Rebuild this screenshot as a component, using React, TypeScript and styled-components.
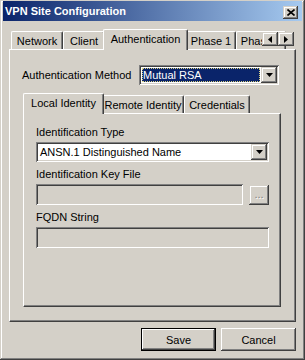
import React from "react"
import styled, {createGlobalStyle, css} from "styled-components"

const FACE = "#D4D0C8"
const SHADOW = "#808080"
const DARK = "#404040"
const HILITE = "#0A246A"

const GlobalStyle = createGlobalStyle`
    html, body {
        margin: 0;
        padding: 0;
        background: ${FACE};
    }
    body {
        font-family: "Liberation Sans", Arial, sans-serif;
        font-size: 11px;
        color: #000;
    }
`

const raised = css`
    background: ${FACE};
    box-shadow: inset -1px -1px ${DARK}, inset 1px 1px ${FACE}, inset -2px -2px ${SHADOW}, inset 2px 2px #fff;
`

const sunken = css`
    box-shadow: inset 1px 1px ${SHADOW}, inset -1px -1px #fff, inset 2px 2px ${DARK}, inset -2px -2px ${FACE};
`

export const Window = styled.div`
    box-sizing: border-box;
    width: 305px;
    height: 360px;
    padding: 1px 3px 0;
    display: flex;
    flex-direction: column;
    background: ${FACE};
    box-shadow: inset -1px -1px ${DARK}, inset 1px 1px ${FACE}, inset -2px -2px ${SHADOW}, inset 2px 2px #fff;
`

export const TitleBar = styled.div`
    height: 20px;
    flex: 0 0 auto;
    display: flex;
    align-items: flex-start;
    justify-content: space-between;
    padding: 0 4px 0 2px;
    background: linear-gradient(to right, ${HILITE}, #A6CAF0);
    color: #fff;
    font-weight: bold;
`

export const TitleText = styled.span`
    line-height: 20px;
    white-space: nowrap;
`

export const CloseButton = styled.div`
    ${raised};
    width: 15px;
    height: 13px;
    margin-top: 5px;
    display: flex;
    align-items: center;
    justify-content: center;
    padding-bottom: 1px;
    box-sizing: border-box;
`

export const Body = styled.div`
    flex: 1;
    display: flex;
    flex-direction: column;
    padding: 8px 6px 0;
`

export const TabControl = styled.div<{$indent?: number; $top?: number}>`
    position: relative;
    margin-left: ${p => p.$indent || 0}px;
    margin-top: ${p => p.$top || 0}px;
`

export const TabStrip = styled.div`
    display: flex;
    align-items: flex-end;
    height: 20px;
    padding-left: 2px;
`

export const Tab = styled.div<{$w: number; $active?: boolean}>`
    box-sizing: border-box;
    flex: 0 0 auto;
    position: relative;
    z-index: ${p => (p.$active ? 2 : 1)};
    width: ${p => (p.$active ? p.$w + 4 : p.$w)}px;
    height: ${p => (p.$active ? 21 : 18)}px;
    margin: ${p => (p.$active ? "0 -2px -1px" : "0")};
    padding-bottom: ${p => (p.$active ? 2 : 0)}px;
    display: flex;
    align-items: center;
    justify-content: center;
    overflow: hidden;
    white-space: nowrap;
    background: ${FACE};
    border-top: 1px solid #fff;
    border-left: 1px solid #fff;
    border-right: 1px solid ${DARK};
    border-radius: 2px 2px 0 0;
    box-shadow: inset -1px 0 ${SHADOW};
`

export const TabPanel = styled.div<{$h: number}>`
    box-sizing: border-box;
    height: ${p => p.$h}px;
    border-top: 1px solid #fff;
    border-left: 1px solid #fff;
    border-right: 1px solid ${DARK};
    border-bottom: 1px solid ${DARK};
    box-shadow: inset -1px -1px ${SHADOW};
    display: flex;
    flex-direction: column;
`

export const OuterPanel = styled(TabPanel)`
    padding: 15px 14px 0 12px;
`

export const InnerPanel = styled(TabPanel)`
    padding: 12px 11px 0 12px;
`

export const ScrollArrows = styled.div`
    position: absolute;
    top: 3px;
    right: 2px;
    z-index: 3;
    display: flex;
`

export const SmallButton = styled.div<{$w: number; $h: number}>`
    ${raised};
    box-sizing: border-box;
    width: ${p => p.$w}px;
    height: ${p => p.$h}px;
    flex: 0 0 auto;
    display: flex;
    align-items: center;
    justify-content: center;
`

export const MethodRow = styled.div`
    display: flex;
    align-items: center;
    height: 20px;
`

export const Label = styled.div`
    line-height: 13px;
    white-space: nowrap;
`

export const MethodCombo = styled.div`
    ${sunken};
    box-sizing: border-box;
    width: 140px;
    height: 20px;
    margin: 0 2px 0 auto;
    padding: 2px;
    display: flex;
    background: #fff;
`

export const Combo = styled(MethodCombo)`
    width: auto;
    margin: 0;
`

export const ComboText = styled.div<{$selected?: boolean}>`
    flex: 1;
    margin: 1px;
    padding: 0 1px;
    line-height: 14px;
    white-space: nowrap;
    overflow: hidden;
    ${p => p.$selected && css`
        background: ${HILITE};
        color: #fff;
        outline: 1px dotted #d8d080;
        outline-offset: -1px;
    `}
`

export const FieldGroup = styled.div`
    display: flex;
    flex-direction: column;
    gap: 3px;
    margin-bottom: 6px;
`

export const FileRow = styled.div`
    display: flex;
    align-items: center;
    gap: 6px;
`

export const TextBox = styled.div`
    ${sunken};
    box-sizing: border-box;
    flex: 1 1 auto;
    min-width: 0;
    height: 21px;
    background: ${FACE};
`

export const DisabledDots = styled.span`
    color: ${SHADOW};
    text-shadow: 1px 1px #fff;
    line-height: 10px;
    padding-bottom: 2px;
`

export const ButtonRow = styled.div`
    display: flex;
    justify-content: flex-end;
    gap: 5px;
    margin-top: 6px;
`

export const PushButton = styled.button<{$default?: boolean}>`
    box-sizing: border-box;
    width: 75px;
    height: 23px;
    padding: 0;
    font: inherit;
    color: #000;
    background: ${FACE};
    border: ${p => (p.$default ? "1px solid #000" : "none")};
    box-shadow: inset -1px -1px ${DARK}, inset 1px 1px #fff, inset -2px -2px ${SHADOW};
`

const DownArrow = () => (
    <svg width="7" height="4" viewBox="0 0 7 4"><polygon points="0,0 7,0 3.5,4" fill="#000" /></svg>
)

const SideArrow: React.FC<{dir: "left" | "right"}> = ({dir}) => (
    <svg width="4" height="7" viewBox="0 0 4 7">
        <polygon points={dir == "left" ? "4,0 4,7 0,3.5" : "0,0 0,7 4,3.5"} fill="#000" />
    </svg>
)

const CloseGlyph = () => (
    <svg width="8" height="7" viewBox="0 0 8 7">
        <path d="M0.5 0.5 L7.5 6.5 M7.5 0.5 L0.5 6.5" stroke="#000" strokeWidth="1.6" />
    </svg>
)

const outerTabs = [
    {label: "Network", w: 52},
    {label: "Client", w: 42},
    {label: "Authentication", w: 81, active: true},
    {label: "Phase 1", w: 50},
    {label: "Phase 2", w: 50},
]

const innerTabs = [
    {label: "Local Identity", w: 77, active: true},
    {label: "Remote Identity", w: 82},
    {label: "Credentials", w: 66},
]

const App: React.FC = () => {
    return (
        <Window>
            <GlobalStyle />
            <TitleBar>
                <TitleText>VPN Site Configuration</TitleText>
                <CloseButton><CloseGlyph /></CloseButton>
            </TitleBar>
            <Body>
                <TabControl>
                    <TabStrip>
                        {outerTabs.map(t => (
                            <Tab key={t.label} $w={t.w} $active={t.active}>{t.label}</Tab>
                        ))}
                    </TabStrip>
                    <ScrollArrows>
                        <SmallButton $w={16} $h={14}><SideArrow dir="left" /></SmallButton>
                        <SmallButton $w={16} $h={14}><SideArrow dir="right" /></SmallButton>
                    </ScrollArrows>
                    <OuterPanel $h={273}>
                        <MethodRow>
                            <Label>Authentication Method</Label>
                            <MethodCombo>
                                <ComboText $selected>Mutual RSA</ComboText>
                                <SmallButton $w={16} $h={16}><DownArrow /></SmallButton>
                            </MethodCombo>
                        </MethodRow>
                        <TabControl $indent={1} $top={8}>
                            <TabStrip>
                                {innerTabs.map(t => (
                                    <Tab key={t.label} $w={t.w} $active={t.active}>{t.label}</Tab>
                                ))}
                            </TabStrip>
                            <InnerPanel $h={194}>
                                <FieldGroup>
                                    <Label>Identification Type</Label>
                                    <Combo>
                                        <ComboText>ANSN.1 Distinguished Name</ComboText>
                                        <SmallButton $w={16} $h={16}><DownArrow /></SmallButton>
                                    </Combo>
                                </FieldGroup>
                                <FieldGroup>
                                    <Label>Identification Key File</Label>
                                    <FileRow>
                                        <TextBox />
                                        <SmallButton $w={20} $h={20}><DisabledDots>...</DisabledDots></SmallButton>
                                    </FileRow>
                                </FieldGroup>
                                <FieldGroup>
                                    <Label>FQDN String</Label>
                                    <TextBox />
                                </FieldGroup>
                            </InnerPanel>
                        </TabControl>
                    </OuterPanel>
                </TabControl>
                <ButtonRow>
                    <PushButton $default>Save</PushButton>
                    <PushButton>Cancel</PushButton>
                </ButtonRow>
            </Body>
        </Window>
    )
}

export default App
